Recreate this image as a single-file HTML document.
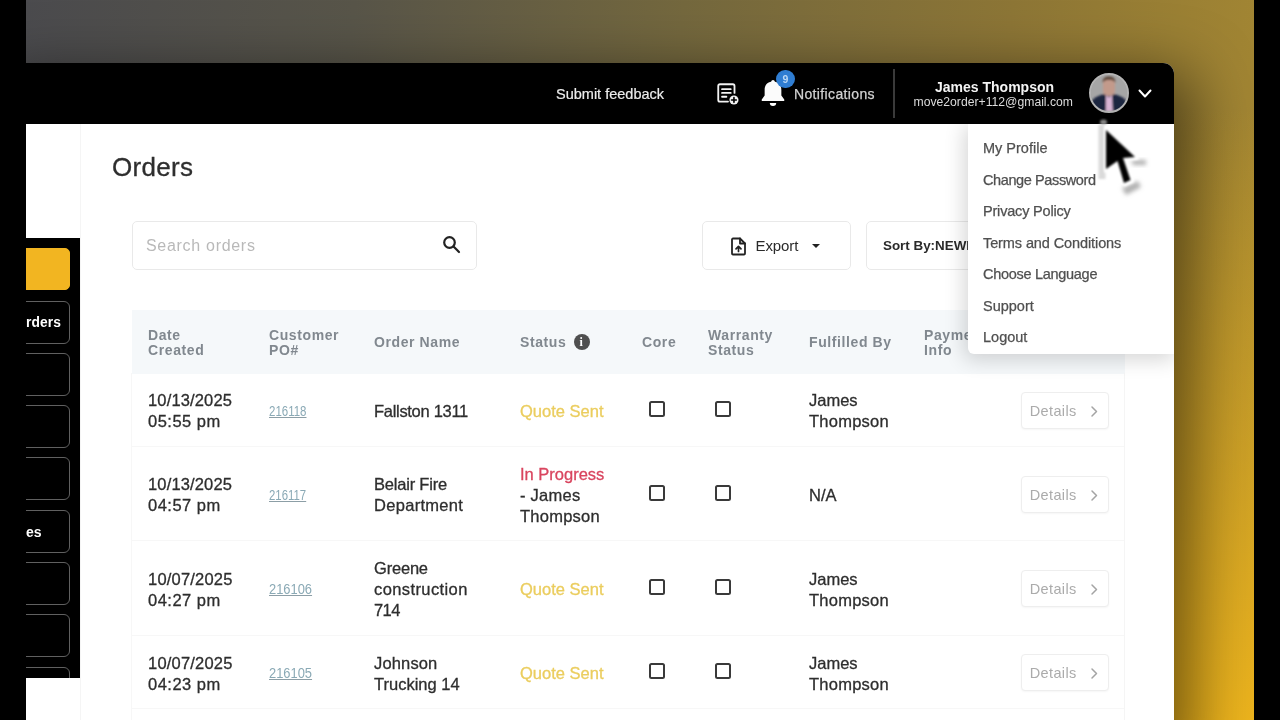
<!DOCTYPE html>
<html><head><meta charset="utf-8">
<style>
*{box-sizing:border-box;margin:0;padding:0}
html,body{width:1280px;height:720px;overflow:hidden;background:#000;font-family:"Liberation Sans",sans-serif}
.abs{position:absolute}
#stage{position:absolute;left:26px;top:0;width:1228px;height:720px;overflow:hidden;
 background:linear-gradient(97deg,#4b4b4e 0%,#585549 25%,#74683e 50%,#8d7636 75%,#a88a32 100%)}
#stage .glow{position:absolute;left:0;top:0;width:100%;height:100%;
 background:linear-gradient(180deg,rgba(235,180,30,0) 0%,rgba(235,180,30,0) 15%,rgba(240,182,28,.95) 100%)}
#fx{position:absolute;left:0;top:0;width:1228px;height:720px;filter:blur(.6px)}
#org{position:absolute;left:20px;top:0;width:1148px;height:680px}
#win{position:absolute;left:-20px;top:63px;width:1168px;height:680px;background:#fff;border-top-right-radius:11px;overflow:hidden}
#winshadow{position:absolute;left:-20px;top:63px;width:1168px;height:680px;border-top-right-radius:11px;box-shadow:8px 22px 60px 12px rgba(0,0,0,.5)}
#hdr{position:absolute;left:0;top:0;width:100%;height:61px;background:#000}
.t{position:absolute;white-space:nowrap;line-height:1}
.w{color:#fff}
#side{position:absolute;left:0;top:175px;width:54px;height:440px;background:#000;overflow:hidden}
.sb{position:absolute;left:-20px;width:64px;height:43px;border:1.5px solid #606060;border-radius:6px}
.sb.y{background:#f2b521;border-color:#f2b521;border-radius:5px;height:42px}
#sdiv{position:absolute;left:54px;top:61px;width:1px;height:700px;background:#f5f5f5}
.box{position:absolute;border:1px solid #e9e9e9;border-radius:5px;background:#fff}
#tbl{position:absolute;left:106px;top:247px;width:993px;height:500px;background:#fff}
#th{position:absolute;left:0;top:0;width:100%;height:64px;background:#f5f8fa}
.hc{position:absolute;font-weight:bold;font-size:14px;line-height:15.5px;color:#81888f;letter-spacing:.6px;white-space:nowrap}
.row{position:absolute;left:0;width:100%;border-bottom:1px solid #f7f7f7}
.c{position:absolute;font-size:16.5px;line-height:21px;color:#2e2e2e;white-space:nowrap;-webkit-text-stroke:.3px}
.c span{display:inline-block}
.lnk{position:absolute;color:#8aa9b5;text-decoration:underline;text-decoration-color:#8c9ea6;text-decoration-thickness:1.2px;font-size:15px;line-height:21px;transform-origin:0 50%;white-space:nowrap}
.qs{color:#ebcd5e}
.ip{color:#d9455f}
.cb{position:absolute;width:16px;height:16px;border:2px solid #3a3a3a;border-radius:2.5px;background:#fff}
.det{position:absolute;left:888.8px;width:88px;height:37px;border:1px solid #eeeeee;border-radius:4px;background:#fff;box-shadow:0 1px 2px rgba(0,0,0,.04)}
.det span{position:absolute;left:8px;top:10px;font-size:14.5px;color:#ababab;letter-spacing:.35px;line-height:16px}
.det svg{position:absolute;left:66px;top:12px}
#menu{position:absolute;left:942px;top:61px;width:206px;height:229.5px;background:#fff;border-bottom-left-radius:6px;box-shadow:-2px 4px 20px 2px rgba(0,0,0,.16)}

.mi{position:absolute;left:15px;-webkit-text-stroke:.25px;font-size:14.5px;color:#505050;line-height:16px;white-space:nowrap}
</style></head><body>
<div id="stage">
 <div class="glow"></div>
 <div id="fx">
 <div id="winshadow"></div>
 <div id="win"><div id="org">

  <div id="hdr">
   <div class="t" id="sf" style="left:530px;top:24px;font-size:14.500px;color:#ececec;-webkit-text-stroke:.2px">Submit feedback</div>
   <svg class="abs" style="left:689px;top:18px" width="26" height="26" viewBox="0 0 24 24" fill="none" stroke="#f2f2f2" stroke-width="1.700" stroke-linecap="round" stroke-linejoin="round"><path d="M12 19H4.500A1.500 1.500 0 0 1 3 17.500V4.500A1.500 1.500 0 0 1 4.500 3H16.500A1.500 1.500 0 0 1 18 4.500V11"/><path d="M6.500 7.500H14.500M6.500 11H14.500M6.500 14.500H10.500"/><circle cx="17.500" cy="17.500" r="4.200" fill="#f2f2f2" stroke="none"/><path d="M17.500 15.300V19.700M15.300 17.500H19.700" stroke="#000" stroke-width="1.500"/></svg>
   <svg class="abs" style="left:732px;top:14.700px" width="30" height="30" viewBox="0 0 28 30" preserveAspectRatio="none"><path d="M14 3.500C8.500 3.500 6.200 7.500 6.200 12V17.500L3.500 21.500V23H24.500V21.500L21.800 17.500V12C21.800 7.500 19.500 3.500 14 3.500Z" fill="#fbfbfb"/><path d="M11 25H17A3 3 0 0 1 11 25Z" fill="#fff"/><circle cx="14" cy="3.500" r="1.600" fill="#fff"/></svg>
   <div class="abs" style="left:750px;top:6.500px;width:18.800px;height:18.800px;border-radius:50%;background:#2f7dd2"></div>
   <div class="t" style="left:756.500px;top:11px;font-size:10.500px;color:#bcd8f5;font-weight:bold">9</div>
   <div class="t" id="nt" style="left:768px;top:24px;font-size:14px;color:#d2d2d2;letter-spacing:.36px;-webkit-text-stroke:.25px">Notifications</div>
   <div class="abs" style="left:867px;top:6px;width:1.500px;height:49px;background:#3a3a3a"></div>
   <div class="t w" id="jt" style="left:909px;top:16.700px;font-size:14px;font-weight:bold;color:#f4f4f4">James Thompson</div>
   <div class="t" id="em" style="left:887.500px;top:33px;font-size:12.200px;color:#dcdcdc">move2order+112@gmail.com</div>
   <div class="abs" id="av" style="left:1063px;top:10.300px;width:40px;height:40px;border-radius:50%;border:2px solid #b4b4b4;background:#a3a3a3;overflow:hidden">
    <svg class="abs" style="left:0;top:0" width="36" height="36" viewBox="0 0 36 36"><defs><filter id="ab" x="-20%" y="-20%" width="140%" height="140%"><feGaussianBlur stdDeviation="0.9"/></filter></defs>
     <rect width="36" height="36" fill="#a6a6a6"/>
     <g filter="url(#ab)">
      <path d="M0 36V27C3 22 9 20 13.500 19H22.500C27 20 33 22 36 27V36Z" fill="#1c2540"/>
      <rect x="12" y="2.500" width="12" height="18.500" rx="5.500" fill="#c39a8b"/>
      <path d="M11.500 8C11.500 3 14 1.500 18 1.500S24.500 3 24.500 8C23 5.500 21 5 18 5S13 5.500 11.500 8Z" fill="#5b4538"/>
      <path d="M15 20L18 22.500L21 20L21.800 36L14.800 36Z" fill="#d9b5d6"/>
     </g>
    </svg>
   </div>
   <svg class="abs" style="left:1111px;top:24.800px" width="16" height="12" viewBox="0 0 16 12" fill="none" stroke="#fff" stroke-width="2" stroke-linecap="round" stroke-linejoin="round"><path d="M2.500 2.500L8 8.500L13.500 2.500"/></svg>
  </div>

  <div id="sdiv"></div>
  <div id="side">
   <div class="sb y" style="top:10px"></div>
   <div class="sb" style="top:62.5px"><div class="t w" style="left:19px;top:14.500px;font-size:13.800px;font-weight:bold;letter-spacing:.1px">rders</div></div>
   <div class="sb" style="top:114.5px"></div>
   <div class="sb" style="top:166.5px"></div>
   <div class="sb" style="top:219px"></div>
   <div class="sb" style="top:271.5px"><div class="t w" style="left:19px;top:14px;font-size:14px;font-weight:bold;letter-spacing:0">es</div></div>
   <div class="sb" style="top:323.5px"></div>
   <div class="sb" style="top:375.5px"></div>
   <div class="sb" style="top:428.5px"></div>
  </div>

  <div class="t" id="ttl" style="left:86px;top:90.800px;font-size:26px;color:#2e2e2e;letter-spacing:.3px;-webkit-text-stroke:.3px">Orders</div>
  <div class="box" style="left:106px;top:157.500px;width:345px;height:49.500px"></div>
  <div class="t" id="ph" style="left:120px;top:174.500px;font-size:16px;color:#b9b9b9;letter-spacing:.7px">Search orders</div>
  <svg class="abs" style="left:415px;top:171px" width="22" height="22" viewBox="0 0 22 22" fill="none" stroke="#222" stroke-width="2.200" stroke-linecap="round"><circle cx="8.500" cy="8.500" r="5.300"/><path d="M12.800 12.800L18 18"/></svg>
  <div class="box" style="left:676px;top:157.500px;width:148.500px;height:49.500px"></div>
  <svg class="abs" style="left:703.500px;top:173.500px" width="17" height="19" viewBox="0 0 17 19" fill="none" stroke="#222" stroke-width="1.800" stroke-linejoin="round" stroke-linecap="round"><path d="M2 2.500A1 1 0 0 1 3 1.500H10L15 6.500V16.500A1 1 0 0 1 14 17.500H3A1 1 0 0 1 2 16.500Z"/><path d="M10 1.500V6.500H15" /><path d="M8.500 14.500V9.500M6 11.800L8.500 9.300L11 11.800" stroke-width="1.700"/></svg>
  <div class="t" id="ex" style="left:729.500px;top:174.500px;font-size:15px;color:#2a2a2a;letter-spacing:-.1px">Export</div>
  <div class="abs" style="left:785.500px;top:181px;width:0;height:0;border-left:4px solid transparent;border-right:4px solid transparent;border-top:4.500px solid #222"></div>
  <div class="box" style="left:840px;top:157.500px;width:200px;height:49.500px"></div>
  <div class="t" id="so" style="left:857px;top:175.700px;font-size:13.400px;font-weight:bold;color:#2a2a2a">Sort By:NEWEST</div>

  <div id="tbl">

   <div id="th">
    <div class="hc" style="left:16px;top:17.8px">Date<br>Created</div>
    <div class="hc" style="left:137px;top:17.8px">Customer<br>PO#</div>
    <div class="hc" style="left:242px;top:24.8px">Order Name</div>
    <div class="hc" style="left:388px;top:24.8px">Status</div>
    <div class="abs" style="left:441.500px;top:24px;width:16px;height:16px;border-radius:50%;background:#4f4f4f"></div>
    <div class="t" style="left:447.500px;top:26px;font-size:12px;font-weight:bold;color:#fff;font-family:'Liberation Serif',serif">i</div>
    <div class="hc" style="left:510px;top:24.8px">Core</div>
    <div class="hc" style="left:576px;top:17.8px">Warranty<br>Status</div>
    <div class="hc" style="left:677px;top:24.8px">Fulfilled By</div>
    <div class="hc" style="left:792px;top:17.8px">Payment<br>Info</div>
   </div>

<div class="row" style="top:63px;height:73.5px"><div class="c" style="left:16px;top:17.35px"><span style="letter-spacing:0.15px">10/13/2025</span><br><span style="letter-spacing:0.5px">05:55 pm</span></div><div class="lnk" style="left:137px;top:26.85px;transform:scaleX(0.766)">216118</div><div class="c" style="left:242px;top:27.85px"><span style="letter-spacing:-0.3px">Fallston 1311</span></div><div class="c" style="left:388px;top:27.85px"><span class="qs">Quote Sent</span></div><div class="cb" style="left:516.500px;top:27.65px"></div><div class="cb" style="left:582.500px;top:27.65px"></div><div class="c" style="left:677px;top:17.35px"><span>James</span><br><span style="letter-spacing:0.25px">Thompson</span></div><div class="det" style="top:18.65px"><span>Details</span><svg width="12" height="13" viewBox="0 0 12 13" fill="none" stroke="#a4a4a4" stroke-width="1.500" stroke-linecap="round" stroke-linejoin="round"><path d="M4 2L8.500 6.500L4 11"/></svg></div></div><div class="row" style="top:136.5px;height:94.5px"><div class="c" style="left:16px;top:27.85px"><span style="letter-spacing:0.15px">10/13/2025</span><br><span style="letter-spacing:0.5px">04:57 pm</span></div><div class="lnk" style="left:137px;top:37.35px;transform:scaleX(0.76)">216117</div><div class="c" style="left:242px;top:27.85px"><span style="letter-spacing:-0.2px">Belair Fire</span><br><span style="letter-spacing:0.3px">Department</span></div><div class="c" style="left:388px;top:17.35px"><span class="ip">In Progress</span><br><span style="letter-spacing:0.25px">- James</span><br><span style="letter-spacing:0.25px">Thompson</span></div><div class="cb" style="left:516.500px;top:38.15px"></div><div class="cb" style="left:582.500px;top:38.15px"></div><div class="c" style="left:677px;top:38.35px"><span>N/A</span></div><div class="det" style="top:29.15px"><span>Details</span><svg width="12" height="13" viewBox="0 0 12 13" fill="none" stroke="#a4a4a4" stroke-width="1.500" stroke-linecap="round" stroke-linejoin="round"><path d="M4 2L8.500 6.500L4 11"/></svg></div></div><div class="row" style="top:231px;height:94.5px"><div class="c" style="left:16px;top:27.85px"><span style="letter-spacing:0.2px">10/07/2025</span><br><span style="letter-spacing:0.5px">04:27 pm</span></div><div class="lnk" style="left:137px;top:37.35px;transform:scaleX(0.86)">216106</div><div class="c" style="left:242px;top:17.35px"><span style="letter-spacing:-0.2px">Greene</span><br><span style="letter-spacing:0.4px">construction</span><br><span style="letter-spacing:-0.6px">714</span></div><div class="c" style="left:388px;top:38.35px"><span class="qs">Quote Sent</span></div><div class="cb" style="left:516.500px;top:38.15px"></div><div class="cb" style="left:582.500px;top:38.15px"></div><div class="c" style="left:677px;top:27.85px"><span>James</span><br><span style="letter-spacing:0.25px">Thompson</span></div><div class="det" style="top:29.15px"><span>Details</span><svg width="12" height="13" viewBox="0 0 12 13" fill="none" stroke="#a4a4a4" stroke-width="1.500" stroke-linecap="round" stroke-linejoin="round"><path d="M4 2L8.500 6.500L4 11"/></svg></div></div><div class="row" style="top:325.5px;height:73.5px"><div class="c" style="left:16px;top:17.35px"><span style="letter-spacing:0.2px">10/07/2025</span><br><span style="letter-spacing:0.5px">04:23 pm</span></div><div class="lnk" style="left:137px;top:26.85px;transform:scaleX(0.86)">216105</div><div class="c" style="left:242px;top:17.35px"><span style="letter-spacing:0.15px">Johnson</span><br><span>Trucking 14</span></div><div class="c" style="left:388px;top:27.85px"><span class="qs">Quote Sent</span></div><div class="cb" style="left:516.500px;top:27.65px"></div><div class="cb" style="left:582.500px;top:27.65px"></div><div class="c" style="left:677px;top:17.35px"><span>James</span><br><span style="letter-spacing:0.25px">Thompson</span></div><div class="det" style="top:18.65px"><span>Details</span><svg width="12" height="13" viewBox="0 0 12 13" fill="none" stroke="#a4a4a4" stroke-width="1.500" stroke-linecap="round" stroke-linejoin="round"><path d="M4 2L8.500 6.500L4 11"/></svg></div></div>
  </div>
  <div class="abs" style="left:105px;top:310px;width:1px;height:400px;background:#f7f7f7"></div>
  <div class="abs" style="left:1098px;top:310px;width:1px;height:400px;background:#f5f5f5"></div>

  <div id="menu">
   <div class="mi" style="top:15.7px">My Profile</div>
   <div class="mi" style="top:47.7px;letter-spacing:-.39px">Change Password</div>
   <div class="mi" style="top:79.2px;letter-spacing:-.19px">Privacy Policy</div>
   <div class="mi" style="top:110.7px;letter-spacing:-.1px">Terms and Conditions</div>
   <div class="mi" style="top:142.2px;letter-spacing:-.29px">Choose Language</div>
   <div class="mi" style="top:173.7px">Support</div>
   <div class="mi" style="top:205.2px">Logout</div>
  </div>

  <svg class="abs" id="cur" style="left:1060px;top:50px" width="80" height="90" viewBox="0 0 80 90">
   <defs><filter id="b1" x="-30%" y="-30%" width="160%" height="160%"><feGaussianBlur stdDeviation="0.9"/></filter><filter id="b2" x="-50%" y="-50%" width="200%" height="200%"><feGaussianBlur stdDeviation="2"/></filter></defs>
   <ellipse cx="17.500" cy="9" rx="3.500" ry="2.500" fill="#8a8a8a" filter="url(#b1)"/>
   <rect x="12.500" y="12" width="7" height="54" fill="#dadada" filter="url(#b1)"/>
   <path d="M45 47L60 47L60 52L47 52Z" fill="#b0b0b0" filter="url(#b2)"/>
   <path d="M36 75L52 68L55 74L40 82Z" fill="#b0b0b0" filter="url(#b2)"/>
   <path d="M20 14L20 58L31.500 49L39 71L46 68L38 46L51 45Z" fill="#fff" stroke="#fff" stroke-width="4" stroke-linejoin="round" filter="url(#b1)"/>
   <path d="M20 17L20 56L31.500 48L38 70L44.500 67L37 45L49 44Z" fill="#000" filter="url(#b1)"/>
  </svg>

 </div></div>
 </div>
</div>
</body></html>
